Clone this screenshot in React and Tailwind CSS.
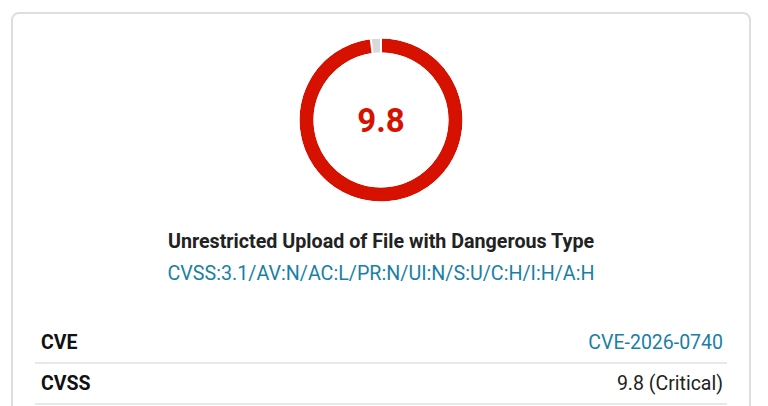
import React from "react";

const score = 9.8;

// ring geometry
const C = 82;
const R = 74.5;

const pt = (deg) => {
  const a = ((deg - 90) * Math.PI) / 180;
  return [C + R * Math.cos(a), C + R * Math.sin(a)];
};

const arc = (from, to) => {
  const [x1, y1] = pt(from);
  const [x2, y2] = pt(to);
  const large = to - from > 180 ? 1 : 0;
  return `M ${x1} ${y1} A ${R} ${R} 0 ${large} 1 ${x2} ${y2}`;
};

const ScoreRing = ({ value }) => {
  const split = (value / 10) * 360;
  const rad = (split * Math.PI) / 180;
  const [sx1, sy1] = pt(0);
  return (
    <div className="relative w-[164px] h-[164px]">
      <svg width="164" height="164" viewBox="0 0 164 164">
        <path d={arc(0, split)} fill="none" stroke="#d61100" strokeWidth="14" />
        <path d={arc(split, 359.99)} fill="none" stroke="#d9d9d9" strokeWidth="14" />
        {/* white separators between segments */}
        <line x1={sx1} y1={sy1 - 9} x2={sx1} y2={sy1 + 9} stroke="#fff" strokeWidth="2" />
        <line
          x1={C + (R - 9) * Math.sin(rad)}
          y1={C - (R - 9) * Math.cos(rad)}
          x2={C + (R + 9) * Math.sin(rad)}
          y2={C - (R + 9) * Math.cos(rad)}
          stroke="#fff"
          strokeWidth="2"
        />
        <circle cx={C} cy={C} r={R + 7.5} fill="none" stroke="#fff" strokeWidth="1" />
        <circle cx={C} cy={C} r={R - 7.5} fill="none" stroke="#fff" strokeWidth="1" />
      </svg>
      <div className="absolute inset-0 flex items-center justify-center">
        <span className="text-[33px] font-bold text-[#d61100] leading-none">
          {value}
        </span>
      </div>
    </div>
  );
};

const rows = [
  { label: "CVE", value: "CVE-2026-0740", link: true },
  { label: "CVSS", value: "9.8 (Critical)" },
];

export default function App() {
  return (
    <div
      className="bg-white min-h-screen pt-3 pl-[11px]"
      style={{ fontFamily: "Roboto, 'Liberation Sans', sans-serif" }}
    >
      <div className="w-[740px] border-2 border-[#dedede] rounded-lg px-[22px] pt-[24px] pb-6">
        {/* Score */}
        <div className="flex justify-center">
          <ScoreRing value={score} />
        </div>

        {/* Title + vector */}
        <div className="mt-[28px] text-center">
          <h2 className="text-[19.7px] leading-6 font-bold text-[#222]">
            Unrestricted Upload of File with Dangerous Type
          </h2>
          <a href="#" className="block mt-2 text-[19.7px] leading-6 text-[#1a7fa6]">
            CVSS:3.1/AV:N/AC:L/PR:N/UI:N/S:U/C:H/I:H/A:H
          </a>
        </div>

        {/* Details */}
        <div className="mt-[37px]">
          {rows.map((r) => (
            <div
              key={r.label}
              className="flex items-center justify-between h-[41px] border-b-2 border-[#e5e9ee] pl-[6px] pr-[4px]"
            >
              <span className="text-[19.5px] font-bold text-[#111]">{r.label}</span>
              <span className={`text-[19.5px] ${r.link ? "text-[#1a7fa6]" : "text-[#222]"}`}>
                {r.value}
              </span>
            </div>
          ))}
        </div>
      </div>
    </div>
  );
}
